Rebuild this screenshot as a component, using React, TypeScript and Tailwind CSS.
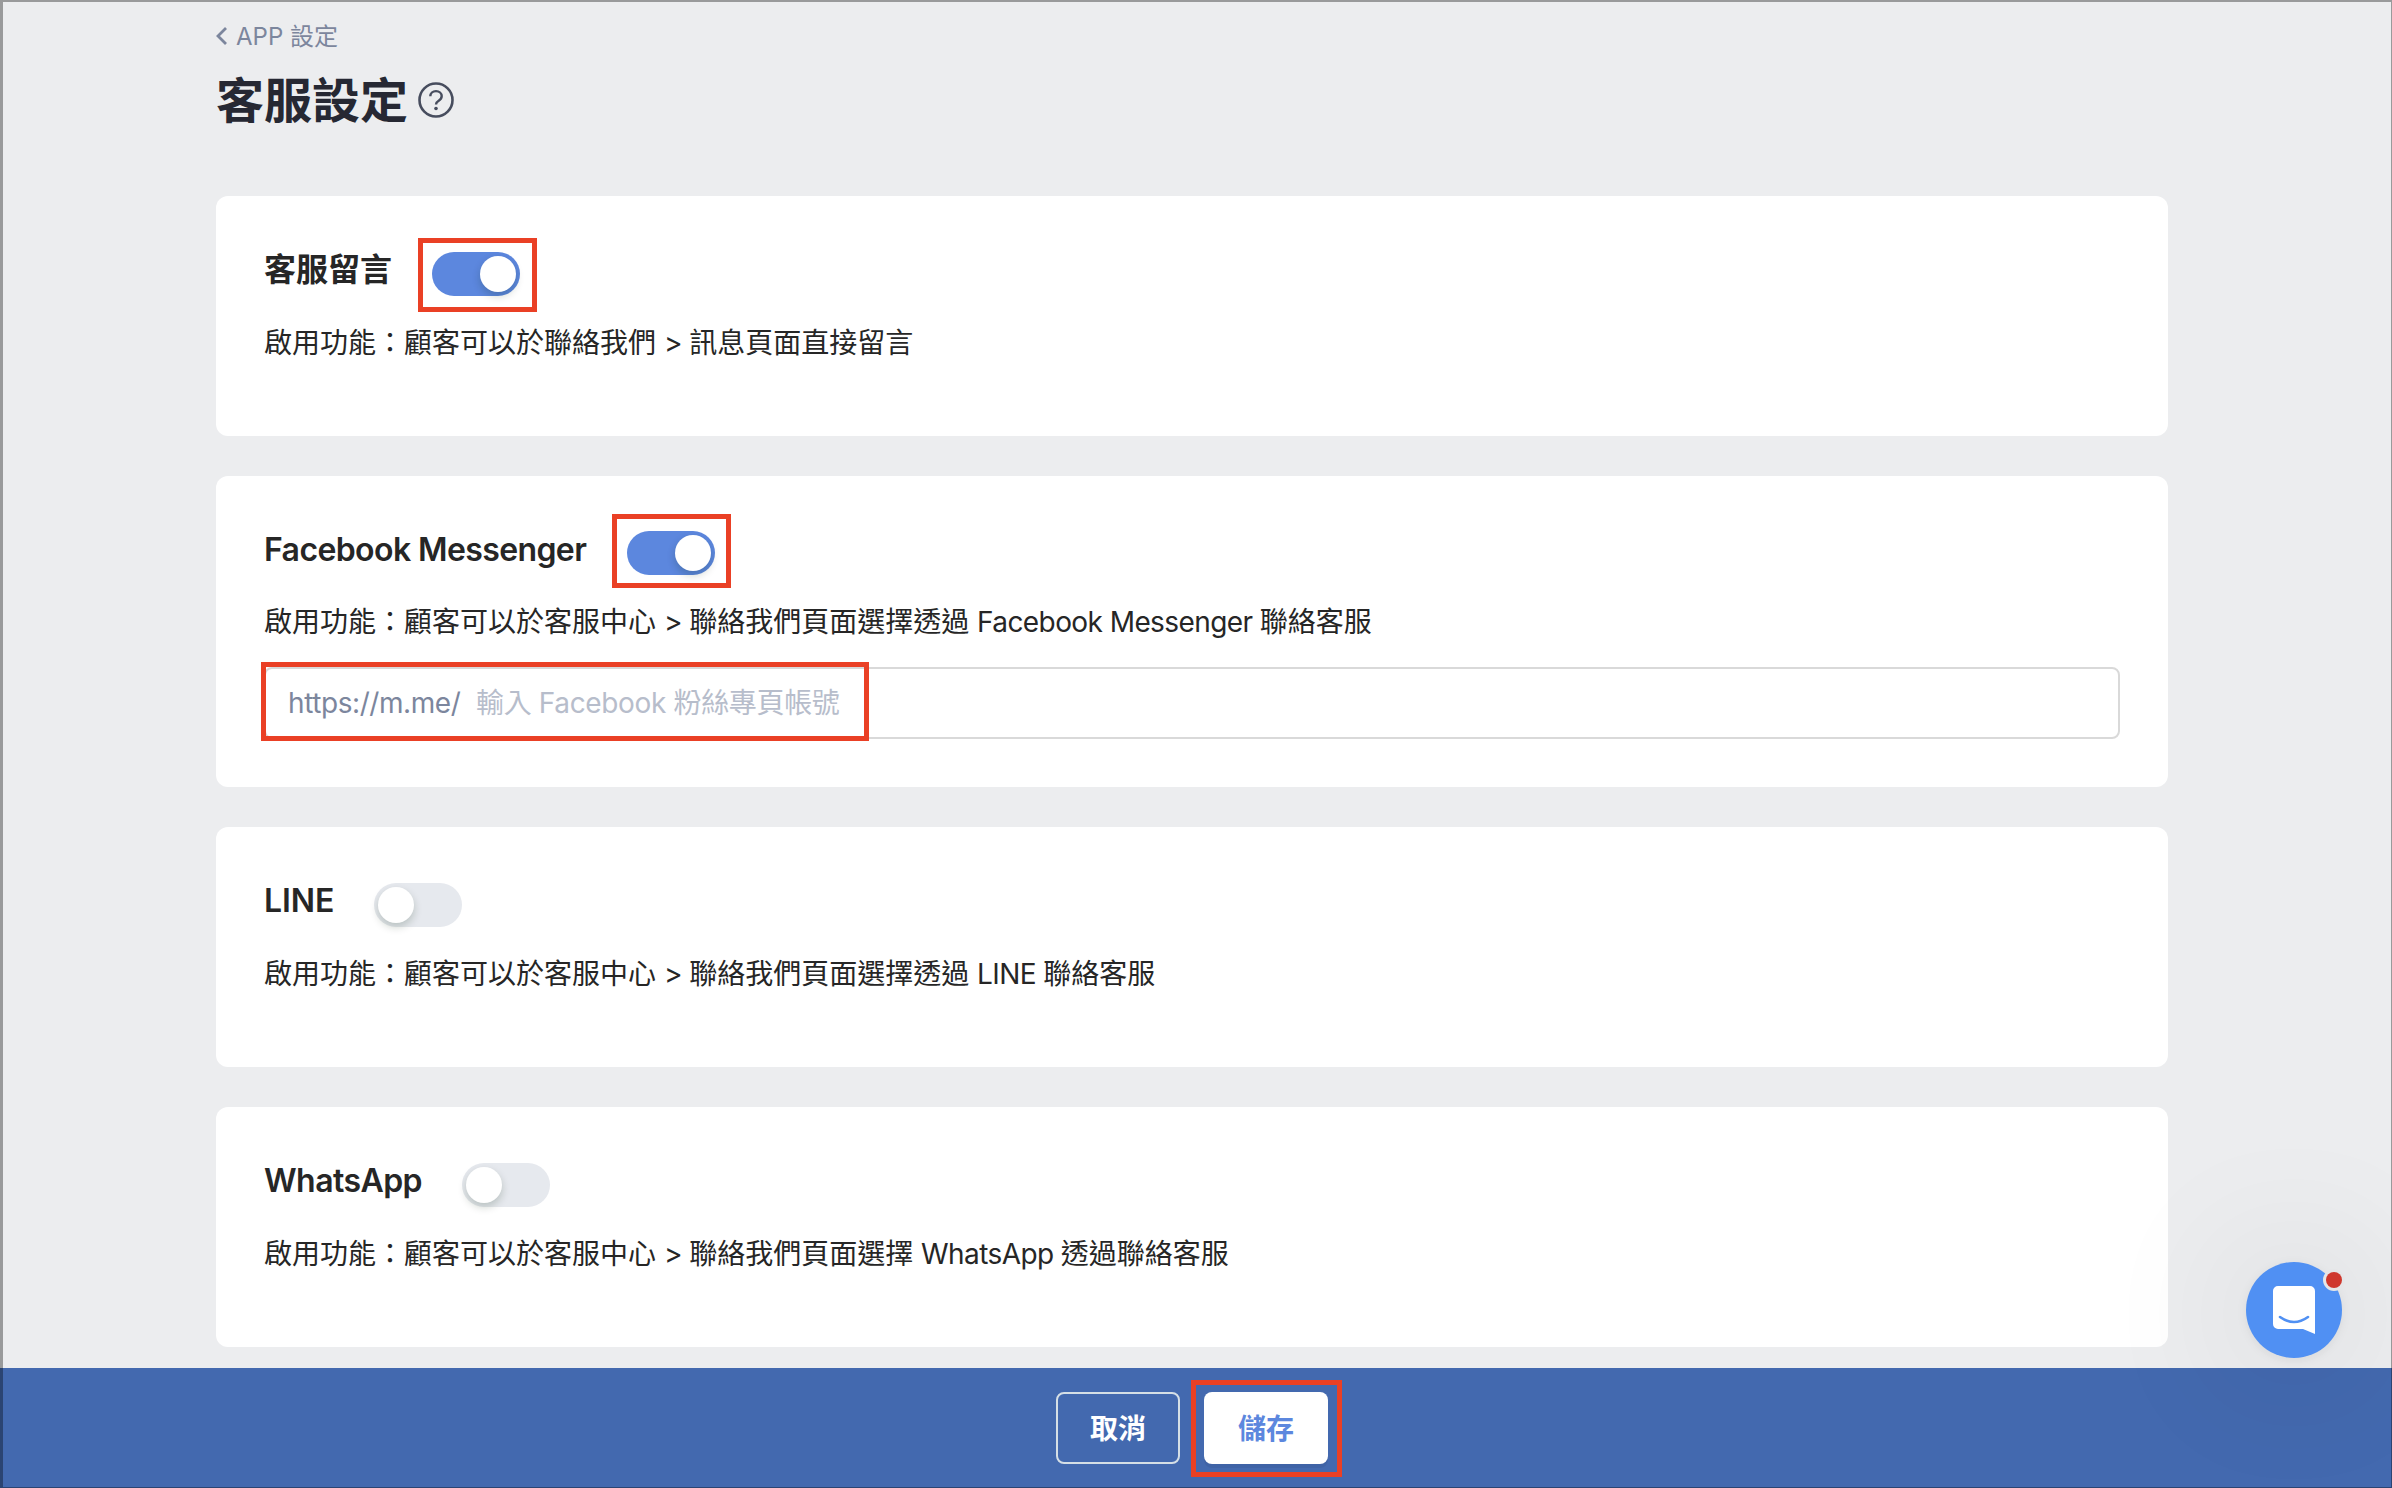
import { useState } from 'react';
import type { ReactNode } from 'react';

export default function App() {
  const [message, setMessage] = useState(true);
  const [messenger, setMessenger] = useState(true);
  const [line, setLine] = useState(false);
  const [whatsapp, setWhatsapp] = useState(false);
  const [account, setAccount] = useState('');

  return (
    <div className="relative flex h-[1488px] w-[2392px] flex-col overflow-hidden bg-[#ecedef] font-['Inter','Noto_Sans_CJK_TC',sans-serif] text-[#262626]">
      <main className="flex-1 pl-[216px] pr-[224px] pt-[19px]">
        <a href="#" className="flex h-9 w-fit items-center text-2xl leading-9 text-[#7c869d]">
          <svg viewBox="0 0 12 18" className="mb-0.5 mr-2 h-[18px] w-3" fill="none" stroke="currentColor" strokeWidth="2.800">
            <path d="M10 1 2 9l8 8" />
          </svg>
          <span>APP 設定</span>
        </a>
        <div className="mt-[11px] flex h-[70px] items-center">
          <h1 className="w-[192px] whitespace-nowrap text-[48px] font-bold leading-[70px] text-[#262833]">
            客服設定
          </h1>
          <HelpIcon />
        </div>

        <div className="mt-[60px] flex flex-col gap-10">
          <Card>
            <TitleRow title="客服留言" width="w-[168px]">
              <Toggle on={message} mark="-left-[14px] -top-[14px]" onChange={setMessage} />
            </TitleRow>
            <Desc>
              啟用功能：顧客可以於聯絡我們 <Latin>&gt; </Latin>訊息頁面直接留言
            </Desc>
          </Card>

          <Card tall>
            <TitleRow tight title="Facebook Messenger" width="w-[363px] tracking-[-0.6px]">
              <Toggle on={messenger} mark="-left-[15px] -top-[17px]" onChange={setMessenger} />
            </TitleRow>
            <Desc>
              啟用功能：顧客可以於客服中心 <Latin>&gt; </Latin>聯絡我們頁面選擇透過{' '}
              <Latin>Facebook Messenger </Latin>聯絡客服
            </Desc>
            <label className="relative mt-[23px] flex h-[72px] items-center rounded-lg border-2 border-[#d9d9d9] pl-[22px] text-[28px]">
              <span className="w-[188px] tracking-[-0.420px] text-[#7c869d]">https://m.me/</span>
              <input
                value={account}
                onChange={(e) => setAccount(e.target.value)}
                placeholder="輸入 Facebook 粉絲專頁帳號"
                className="h-full flex-1 bg-transparent tracking-[-0.350px] outline-none placeholder:text-[#b7bdcb]"
              />
              <span className="pointer-events-none absolute -left-[5px] -top-[7px] h-[79px] w-[608px] border-[5px] border-[#ea4025]" />
            </label>
          </Card>

          <Card>
            <TitleRow title="LINE" width="w-[110px] tracking-[-0.1px]">
              <Toggle on={line} onChange={setLine} />
            </TitleRow>
            <Desc>
              啟用功能：顧客可以於客服中心 <Latin>&gt; </Latin>聯絡我們頁面選擇透過{' '}
              <Latin>LINE </Latin>聯絡客服
            </Desc>
          </Card>

          <Card>
            <TitleRow title="WhatsApp" width="w-[198px] tracking-[-0.550px]">
              <Toggle on={whatsapp} onChange={setWhatsapp} />
            </TitleRow>
            <Desc>
              啟用功能：顧客可以於客服中心 <Latin>&gt; </Latin>聯絡我們頁面選擇{' '}
              <Latin>WhatsApp </Latin>透過聯絡客服
            </Desc>
          </Card>
        </div>
      </main>

      <footer className="flex h-[120px] shrink-0 items-center justify-center gap-6 bg-[#4369af] pr-2">
        <button className="h-[72px] w-[124px] rounded-lg border-2 border-[#d5dfe6] pt-0.5 text-[28px] font-bold leading-none text-white">
          取消
        </button>
        <button className="relative h-[72px] w-[124px] rounded-lg bg-white pt-0.5 text-[28px] font-bold leading-none text-[#5c87de] shadow-[0_4px_0_rgba(0,0,0,0.05)]">
          儲存
          <span className="absolute -left-[13px] -top-3 h-[97px] w-[151px] border-[5px] border-[#ea4025]" />
        </button>
      </footer>

      <ChatLauncher />
      {/* 視窗外框 */}
      <div className="pointer-events-none absolute inset-0 border-b border-l-[3px] border-r border-t-2 border-black/35" />
    </div>
  );
}

function Card({ tall, children }: { tall?: boolean; children: ReactNode }) {
  return (
    <section className={`rounded-xl bg-white px-12 pt-[52px] ${tall ? 'h-[311px]' : 'h-[240px]'}`}>
      {children}
    </section>
  );
}

function TitleRow({
  title,
  width,
  tight,
  children,
}: {
  title: string;
  width: string;
  tight?: boolean;
  children: ReactNode;
}) {
  return (
    <div className={`flex items-start ${tight ? 'h-12' : 'h-[49px]'}`}>
      <h2 className={`${width} shrink-0 whitespace-nowrap text-[32px] font-semibold leading-[44px]`}>
        {title}
      </h2>
      <div className={tight ? 'mt-[3px]' : 'mt-1'}>{children}</div>
    </div>
  );
}

function Desc({ children }: { children: ReactNode }) {
  return <p className="mt-6 whitespace-nowrap text-[28px] leading-[44px]">{children}</p>;
}

// 英文字距略收緊
function Latin({ children }: { children: ReactNode }) {
  return <span className="tracking-[-0.580px]">{children}</span>;
}

function Toggle({
  on,
  mark,
  onChange,
}: {
  on: boolean;
  mark?: string;
  onChange: (v: boolean) => void;
}) {
  return (
    <button
      role="switch"
      aria-checked={on}
      onClick={() => onChange(!on)}
      className={`relative flex h-11 w-[88px] items-center rounded-full px-1 ${
        on ? 'justify-end bg-[#5c87de]' : 'justify-start bg-[#e6e9ee]'
      }`}
    >
      <span className="size-9 rounded-full bg-white shadow-[0_4px_8px_rgba(0,35,11,0.2)]" />
      {mark && <span className={`absolute h-[74px] w-[119px] border-[5px] border-[#ea4025] ${mark}`} />}
    </button>
  );
}

function HelpIcon() {
  return (
    <svg viewBox="0 0 36 36" className="mb-0.5 ml-[10px] size-9" fill="none" stroke="#474d5e">
      <circle cx="18" cy="18" r="16.500" strokeWidth="2.600" />
      <path d="M12.300 14.300c0-3.100 2.500-5.200 5.700-5.200s5.700 2.200 5.700 5c0 2.300-1.300 3.600-3 4.700-1.900 1.200-2.700 2-2.700 3.600" strokeWidth="2.400" />
      <circle cx="18" cy="26.500" r="1.800" fill="#474d5e" stroke="none" />
    </svg>
  );
}

function ChatLauncher() {
  return (
    <button className="absolute bottom-[130px] right-[50px] size-24 rounded-full bg-[#5090f3] shadow-[0_2px_12px_rgba(0,0,0,0.06),0_4px_160px_rgba(0,0,0,0.16)]">
      <svg viewBox="0 0 96 96" className="size-24 overflow-visible">
        <path
          d="M32 24h32a5 5 0 0 1 5 5v43l-12-5H32a5 5 0 0 1-5-5V29a5 5 0 0 1 5-5z"
          fill="#fff"
        />
        <path d="M34 55q14 10 28 0" fill="none" stroke="#5090f3" strokeWidth="2.600" strokeLinecap="round" />
        <circle cx="88" cy="18" r="11" fill="#e5e6e8" />
        <circle cx="88" cy="18" r="8" fill="#cf372d" />
      </svg>
    </button>
  );
}
